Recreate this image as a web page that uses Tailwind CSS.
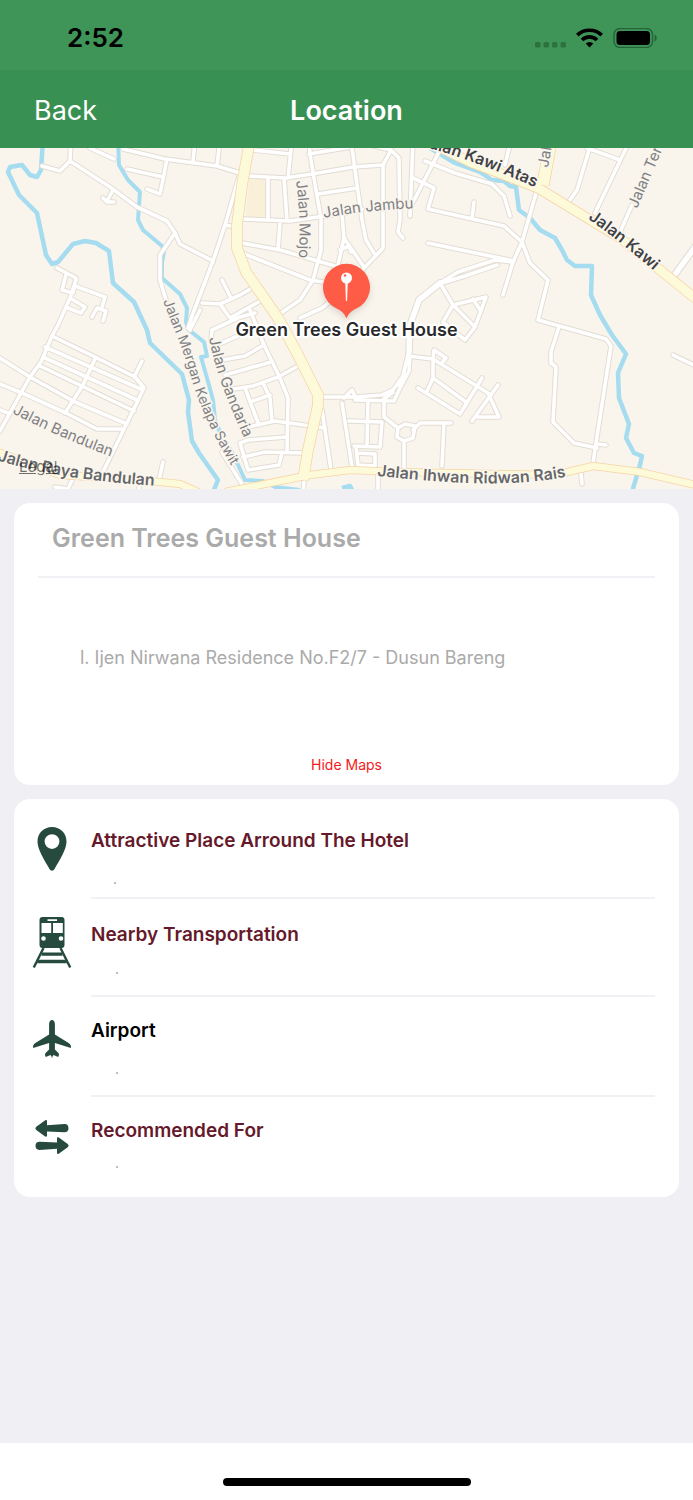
<!DOCTYPE html>
<html lang="en">
  <head>
    <meta charset="UTF-8" />
    <meta name="viewport" content="width=device-width, initial-scale=1.0" />
    <title>Location</title>
    <script src="https://cdn.jsdelivr.net/npm/@tailwindcss/browser@4"></script>
  </head>
  <body class="antialiased">
    <div class="flex flex-col min-h-screen bg-[#efeff4] font-['Inter',sans-serif]">
      <!-- Status bar -->
      <div class="flex items-center justify-between h-[70px] bg-[#3f9458] pl-[67px] pr-9 pt-1.5">
        <span class="text-[26px] leading-8 font-semibold text-black">2:52</span>
        <div class="flex items-center gap-2.5">
          <svg class="w-8 h-6" viewBox="0 0 32 24" fill="#2c713f" aria-hidden="true">
            <rect x="1" y="16" width="5.500" height="5.500" rx="1.500" />
            <rect x="9.500" y="16" width="5.500" height="5.500" rx="1.500" />
            <rect x="18" y="16" width="5.500" height="5.500" rx="1.500" />
            <rect x="26.500" y="16" width="5.500" height="5.500" rx="1.500" />
          </svg>
          <svg class="w-[27px] h-5" viewBox="0 0 27 20" fill="none" stroke="#000" stroke-width="3.700" aria-hidden="true">
            <path d="M1.300 7.200a17.500 17.500 0 0 1 24.400 0" />
            <path d="M6 12a10.800 10.800 0 0 1 15 0" />
            <path d="M13.500 19.500l-3.800-3.900a5.400 5.400 0 0 1 7.600 0z" fill="#000" stroke="none" />
          </svg>
          <svg class="w-[44px] h-5" viewBox="0 0 44 20" aria-hidden="true">
            <rect x="1" y="0.500" width="38.500" height="19" rx="6" fill="none" stroke="#26653a" stroke-width="1.500" />
            <rect x="3.500" y="3" width="33.500" height="14" rx="3.500" fill="#000" />
            <path d="M41.500 6.500c3 1.200 3 5.800 0 7z" fill="#26653a" />
          </svg>
        </div>
      </div>

      <!-- Navigation bar -->
      <header class="grid grid-cols-3 items-center h-[78px] bg-[#399053] px-[34px] pt-1 text-white">
        <button type="button" class="justify-self-start text-[27px] leading-8 cursor-pointer">Back</button>
        <h1 class="text-center text-[27px] leading-8 font-semibold">Location</h1>
      </header>

      <!-- Map -->
      <section class="relative" aria-label="Map">
        <svg class="block w-full h-auto bg-[#f9f5ed]" viewBox="0 148 693 341" fill="none" stroke-linejoin="round">
          <defs>
            <g id="streets">
              <!-- north west -->
              <path d="M42 166L60 171L70 161L110 187L137 207L167 221L175 233L180 244L213 261M71 140L70 161M90 148L114 159M113 190L107 201M103 198L107 202L114 202" />
              <path d="M123 149L165 159L217 166L240 173M167 159L160 194L147 189M127 169L163 177M195 140L193 162M220 140L217 166" />
              <path d="M240 173L225 225L213 261L192 316L188 328M225 225L236 227M175 233L160 255L160 280L166 300" />
              <path d="M202 303L220 304L240 295L254 287M222 280L231 298M220 304L230 318L262 300" />
              <!-- west -->
              <path d="M57 268L76 278L73 293L62 290L66 275M75 286L105 297L102 307M92 317L97 308L106 311L103 321M76 280L70 298L58 325L52 336L41 362L30 377L0 431M70 298L85 307L81 313L68 308" />
              <path d="M52 336L95 357L135 377L144 388L124 429L102 474M45 347L143 390M43 357L137 400M40 366L134 411M0 358L30 377L75 402L127 424M0 384L22 393L66 413L97 429L124 429M95 359L83 385L65 413M142 361L134 377M0 410L8 413" />
              <path d="M55 487L68 489L73 478M163 462L159 480M140 480L138 495" />
              <!-- centre -->
              <path d="M250 176L285 178L312 174L353 167L383 165L391 150M253 150L290 154M292 140L288 178L284 178L287 220M268 178L268 218" />
              <path d="M309 140L310 154L316 190L321 218L321 250L313 280L300 300L278 315M309 154L351 147M351 140L355 170L362 220L366 240L374 253M318 194L357 188" />
              <path d="M383 165L383 248L365 267L350 283M370 145L391 150L399 158L400 220L398 232L403 238M413 140L410 216M440 150L411 206M413 178L434 188L428 209L504 226L522 242M428 243L514 261" />
              <path d="M243 219L290 221L345 213L362 209M280 222L278 250M242 243L280 250L335 266M242 253L310 280L330 283M342 215L344 238L364 267M344 238L338 265M340 250L349 246L351 252" />
              <path d="M300 318L322 308L332 300" />
              <!-- south west blocks -->
              <path d="M250 310L264 345L280 378L288 398L287 452M298 366L278 377L253 386L227 390M222 360L245 356L262 346M225 375L271 362M245 388L259 425M263 383L270 398L272 421M250 402L270 395M248 427L275 421L325 428" />
              <path d="M211 340L212 330L240 317L255 313M217 345L240 335M240 443L248 440L287 437M240 443L248 470L279 465L282 452M243 457L265 452L303 453M222 452L245 489M200 310L190 330" />
              <!-- south centre -->
              <path d="M344 398L352 390L356 398M323 397L356 397L382 395L393 390L403 376L408 355M355 400L394 401L399 390L409 371L410 356M384 399L393 392M400 386L403 378" />
              <path d="M408 356L433 359L434 350L446 358L441 364L433 359L433 378L427 391M441 364L488 393L499 417L477 417M433 378L466 402M482 378L460 414L418 388M498 385L472 421" />
              <path d="M384 399L384 417L398 428L405 424L415 426L413 438L404 441L397 437L398 428M404 441L404 470M413 430L420 423L451 423M444 423L442 466" />
              <path d="M368 401L367 445M349 421L382 422L380 447L354 446M342 403L352 467M322 410L331 470M356 447L358 465L375 466L375 454L358 453M378 475L378 495M304 482L303 495" />
              <!-- east -->
              <path d="M425 161L455 173L492 184L504 196L510 216M474 202L472 218M537 190L522 242L513 262L503 295M522 242L530 263L548 280L538 320L606 339L611 346L598 430L593 463" />
              <path d="M440 283L458 272L495 260L513 262M442 283L465 276L497 265M440 283L453 305L486 297L475 327L465 340L443 322L453 305L475 327M473 299L480 310" />
              <path d="M592 140L577 190L570 200M587 148L620 160M630 140L595 213M511 140L505 165M632 205L620 232" />
              <path d="M559 327L551 352L551 363L556 367L553 422L574 443L597 448M597 444L606 445M581 473L582 484M673 355L700 368" />
            </g>
            <g id="avenues">
              <path d="M409 352L410 325L419 300L440 283M700 240L671 280" />
            </g>
            <path id="kawi" d="M425 140L470 162L538 188L620 238L700 302" />
            <path id="ijen" d="M551 140L543 185" />
            <path id="main" d="M250 140L242 185L237 225L237 248L246 272L262 295L278 318L298 355L318 395L318 405L308 450L303 480" />
            <path id="rais" d="M225 492L310 475L350 470L400 472L555 475L593 466L640 472L700 486" />
            <path id="raya" d="M-10 449L60 475L150 481L180 484L205 495" />
            <path id="t-mojo" d="M296 181Q301 215 299 258" />
            <path id="t-jambu" d="M324 218Q365 210 420 208" />
            <path id="t-atas" d="M429 148Q480 162 550 194" />
            <path id="t-kawi" d="M588 219Q622 242 670 285" />
            <path id="t-mergan" d="M163 301C174 330 182 345 191 377S217 443 240 480" />
            <path id="t-gandaria" d="M209 338C215 370 227 400 245 440" />
            <path id="t-bandulan" d="M12 413Q60 438 120 460" />
            <path id="t-raya" d="M-3 460Q60 481 175 487" />
            <path id="t-rais" d="M377 476C440 482 510 490 580 474" />
          </defs>

          <path d="M249 179h17v39h-20z" fill="#faf0d9" />

          <!-- Rivers -->
          <g stroke="#a5dcf0" stroke-width="4.500">
            <path d="M43 140L41 170L37 177L30 175L22 165L10 167L8 172L19 195L37 213L46 255L52 264L58 262L73 244L85 241L96 243L109 251L113 283L134 302L147 330L150 343L182 374L189 400L188 412L192 441L199 453L218 480L213 492" />
            <path d="M118 140L119 165L128 180L140 192L138 220L143 230L162 246L164 252L162 262L162 278L180 294L187 308L186 322L189 330L204 342L207 356L201 357L209 385L213 400L215 420L221 435L232 452L245 480L263 481L275 487L300 490" stroke-width="4" />
            <path d="M430 148L455 163L480 172L492 180L504 181L510 186L516 187L519 210L530 218L540 230L555 238L562 250L567 260L575 266L592 266L591 295L600 315L612 335L626 354L618 373L619 398L629 424L626 438L634 453L642 456L640 465L632 492" />
            <path d="M342 488L350 486L352 490" />
          </g>

          <!-- Streets: casing first, then fill -->
          <g stroke-linecap="round">
            <use href="#streets" stroke="#e2dcd3" stroke-width="5.500" />
            <use href="#avenues" stroke="#e2dcd3" stroke-width="7.500" />
            <use href="#streets" stroke="#fff" stroke-width="3.600" />
            <use href="#avenues" stroke="#fff" stroke-width="5.500" />
          </g>
          <g stroke="#f7d3a4">
            <use href="#kawi" stroke-width="10.500" />
            <use href="#ijen" stroke-width="13" />
            <use href="#main" stroke-width="11.500" />
            <use href="#rais" stroke-width="8" />
            <use href="#raya" stroke-width="8" />
          </g>
          <g stroke="#fdfad9">
            <use href="#kawi" stroke-width="9" />
            <use href="#ijen" stroke-width="11.500" />
            <use href="#main" stroke-width="10" />
            <use href="#rais" stroke-width="6.500" />
            <use href="#raya" stroke-width="6.500" />
          </g>

          <!-- Street names -->
          <g class="text-[15px]" fill="#7f8084" stroke="#f9f5ed" stroke-width="3" paint-order="stroke">
            <text><textPath href="#t-mojo">Jalan Mojo</textPath></text>
            <text><textPath href="#t-jambu">Jalan Jambu</textPath></text>
            <text class="text-[14px]"><textPath href="#t-mergan">Jalan Mergan Kelapa Sawit</textPath></text>
            <text><textPath href="#t-gandaria">Jalan Gandaria</textPath></text>
            <text><textPath href="#t-bandulan">Jalan Bandulan</textPath></text>
            <text transform="translate(637 209) rotate(-67)">Jalan Tenes</text>
            <text transform="translate(548 168) rotate(-80)">Jalan Ijen</text>
          </g>
          <g class="text-[16px] font-semibold" fill="#66676a" stroke="#fbf7ee" stroke-width="3" paint-order="stroke">
            <text fill="#414245"><textPath href="#t-atas">alan Kawi Atas</textPath></text>
            <text fill="#414245"><textPath href="#t-kawi">Jalan Kawi</textPath></text>
            <text><textPath href="#t-raya">Jalan Raya Bandulan</textPath></text>
            <text><textPath href="#t-rais">Jalan Ihwan Ridwan Rais</textPath></text>
          </g>

          <!-- Marker -->
          <g class="drop-shadow-md">
            <path d="M346.500 318.500c-2-5-5-7.500-9.500-9.700a23.500 23.500 0 1 1 19 0c-4.500 2.200-7.500 4.700-9.500 9.700z" fill="#ff5c47" />
          </g>
          <path d="M345.300 283h2.400l-.6 18h-1.200z" fill="#fff" />
          <circle cx="346.500" cy="278" r="5.500" fill="#fff" />
          <circle cx="345" cy="275.500" r="1.200" fill="#ff5c47" />
          <text class="text-[18px] font-semibold" x="346.500" y="336" text-anchor="middle" fill="#29292b" stroke="#fff" stroke-width="4" paint-order="stroke">Green Trees Guest House</text>
        </svg>
        <a href="#" class="absolute left-[19px] bottom-3 text-[15px] leading-5 text-black/55 underline">Legal</a>
      </section>

      <main class="flex-1 flex flex-col gap-3.5 px-3.5 pt-3.5 pb-6">
        <!-- Hotel address -->
        <section class="flex flex-col bg-white rounded-2xl px-6 pb-2">
          <h2 class="h-[75px] pt-[19px] pl-3.5 border-b-2 border-[#f1f1f5] text-[25px] leading-8 font-semibold text-[#aaaaaa]">Green Trees Guest House</h2>
          <p class="pt-[68px] pb-[83px] pl-[42px] text-[18px] leading-6 text-[#aaaaaa]">l. Ijen Nirwana Residence No.F2/7 - Dusun Bareng</p>
          <button type="button" class="self-center text-[14px] leading-6 text-[#f5191c] cursor-pointer">Hide Maps</button>
        </section>

        <!-- Surroundings -->
        <ul class="bg-white rounded-2xl pl-[18px] pr-6 text-[19px] leading-6 text-[#65192a]">
          <li class="flex gap-[19px]">
            <svg class="w-10 h-[44px] mt-7 shrink-0" viewBox="0 0 40 44" fill="#264b3e" aria-hidden="true">
              <path fill-rule="evenodd" d="M20 0C11.500 0 5.500 6.400 5.500 14.500c0 8 6.300 17.500 12 27.600 1.200 2.200 3.800 2.200 5 0 5.700-10.100 12-19.600 12-27.600C34.500 6.400 28.500 0 20 0zm0 7.200a7.400 7.400 0 1 1 0 14.800a7.400 7.400 0 0 1 0-14.800z" />
            </svg>
            <div class="flex-1 border-b-2 border-[#f1f1f5] pt-[30px] pb-1.5">
              <h3 class="font-semibold">Attractive Place Arround The Hotel</h3>
              <p class="mt-3.5 pl-[22px] text-[14px] leading-6 text-[#999999]">.</p>
            </div>
          </li>
          <li class="flex gap-[19px]">
            <svg class="w-10 h-[52px] mt-[18px] shrink-0" viewBox="0 0 40 52" fill="#264b3e" aria-hidden="true">
              <path fill-rule="evenodd" d="M10.500 0h19a3 3 0 0 1 3 3v25a3 3 0 0 1-3 3h-19a3 3 0 0 1-3-3V3a3 3 0 0 1 3-3zM15.500 2.200v1.800h9.500V2.200zM9.500 6v10h9.700V6zM21 6v10h9.800V6zM11.500 19.200a2.300 2.300 0 1 0 0 4.600a2.300 2.300 0 0 0 0-4.600zM29 19.200a2.300 2.300 0 1 0 0 4.600a2.300 2.300 0 0 0 0-4.600z" />
              <path d="M11.500 31L1.800 50.500M28.500 31L38.200 50.500" stroke="#264b3e" stroke-width="2.400" />
              <path d="M9.500 35.500h21v3.300h-21zM6.500 42.800h27l1.500 3.400h-30z" />
            </svg>
            <div class="flex-1 border-b-2 border-[#f1f1f5] pt-6 pb-3.5">
              <h3 class="font-semibold">Nearby Transportation</h3>
              <p class="mt-2.5 pl-6 text-[14px] leading-6 text-[#999999]">.</p>
            </div>
          </li>
          <li class="flex gap-[19px]">
            <svg class="w-10 h-10 mt-[22px] shrink-0" viewBox="0 0 40 40" fill="#264b3e" aria-hidden="true">
              <path d="M20 1c-1.800 0-2.900 1.700-2.900 4v10.500L3 24.200c-1.500 1-2.300 2.800-1.800 4.800l15.900-5v6.500l-3.500 3.600c-.8.900-.8 2.500.2 4l4.700-2.100.9 1.200.6 2 .6-2 .9-1.200 4.700 2.100c1-1.500 1-3.100.2-4l-3.500-3.600V24l16 5c.4-2-.4-3.800-1.900-4.800L22.900 15.500V5c0-2.300-1.100-4-2.900-4z" />
            </svg>
            <div class="flex-1 border-b-2 border-[#f1f1f5] pt-[22px] pb-3.5">
              <h3 class="font-semibold text-black">Airport</h3>
              <p class="mt-3.5 pl-6 text-[14px] leading-6 text-[#999999]">.</p>
            </div>
          </li>
          <li class="flex gap-[19px]">
            <svg class="w-10 h-9 mt-[22px] shrink-0" viewBox="0 0 40 36" fill="#264b3e" aria-hidden="true">
              <path id="arrow" d="M4.600 7.500l8.700-6.200c.8-.6 1.700-.3 1.700.8v4.100l17.500-1.100c2.500-.1 4 1.500 4 4.100s-1.500 4.100-4 4.100L15 12.600v3.900c0 1.200-.9 1.500-1.800.9L4.600 11.300c-1.600-1.200-1.600-2.600 0-3.800z" />
              <use href="#arrow" transform="rotate(180 20 18)" />
            </svg>
            <div class="flex-1 pt-[22px] pb-[22px]">
              <h3 class="font-semibold">Recommended For</h3>
              <p class="mt-2 pl-6 text-[14px] leading-6 text-[#999999]">.</p>
            </div>
          </li>
        </ul>
      </main>

      <!-- Home indicator -->
      <footer class="flex justify-center h-[57px] bg-white pt-[35px]">
        <div class="w-[248px] h-2 rounded-full bg-black"></div>
      </footer>
    </div>
  </body>
</html>
